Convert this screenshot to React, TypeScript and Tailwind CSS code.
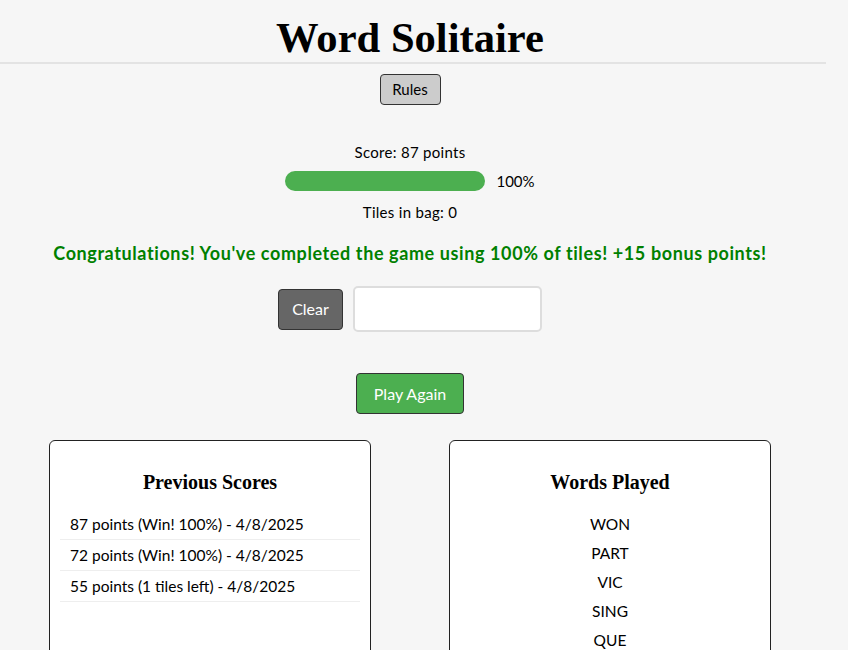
const body = { fontFamily: "Lato, 'Liberation Sans', sans-serif" };
const serif = { fontFamily: "'Liberation Serif', 'DejaVu Serif', serif" };

const scores = [
  "87 points (Win! 100%) - 4/8/2025",
  "72 points (Win! 100%) - 4/8/2025",
  "55 points (1 tiles left) - 4/8/2025",
];

const words = ["WON", "PART", "VIC", "SING", "QUE"];

export default function App() {
  return (
    <div className="min-h-[650px] w-[848px] bg-[#f6f6f6] text-black" style={body}>
      <header className="flex h-[64px] w-[826px] items-center justify-center border-b-2 border-[#e3e3e3] pt-[14px]">
        <h1 className="ml-[-6px] text-[42.6px] font-bold leading-[50px]" style={serif}>
          Word Solitaire
        </h1>
      </header>

      <div className="flex w-[820px] flex-col items-center">
        <button className="mt-[10px] h-[31px] w-[61px] rounded-[4px] border border-[#333] bg-[#cccccc] text-[15px]">
          Rules
        </button>

        <p className="mt-[37px] text-[15px] leading-[20px] tracking-[0.3px]">Score: 87 points</p>
        <div className="mt-[9px] flex items-center gap-[11px]">
          <div className="h-[20px] w-[200px] rounded-full bg-[#4caf50]" />
          <span className="text-[15px] leading-[20px]">100%</span>
        </div>
        <p className="mt-[11px] text-[15px] leading-[20px] tracking-[0.3px]">Tiles in bag: 0</p>

        <p className="mt-[19px] text-[18px] font-bold leading-[24px] tracking-[0.6px] text-[#008000]">
          Congratulations! You've completed the game using 100% of tiles! +15 bonus points!
        </p>

        <div className="mt-[21px] flex items-center gap-[10px]">
          <button className="h-[41px] w-[65px] rounded-[4px] border border-[#333] bg-[#666666] text-[16px] text-white">
            Clear
          </button>
          <input
            className="h-[46px] w-[189px] rounded-[5px] border-2 border-[#dddddd] bg-white px-2 outline-none"
            readOnly
          />
        </div>

        <button className="mt-[41px] h-[41px] w-[108px] rounded-[4px] border border-[#333] bg-[#4caf50] text-[16px] text-white">
          Play Again
        </button>
      </div>

      <div className="mt-[26px] flex w-[820px] gap-[78px] pl-[49px]">
        <section className="h-[240px] w-[322px] rounded-[6px] border border-[#222] bg-white px-[10px] pt-[29px]">
          <h2 className="text-center text-[20px] font-bold leading-[24px]" style={serif}>
            Previous Scores
          </h2>
          <ul className="mt-[15px]">
            {scores.map((s) => (
              <li key={s} className="h-[31px] border-b border-[#eeeeee] px-[10px] text-[15.5px] leading-[30px]">
                {s}
              </li>
            ))}
          </ul>
        </section>

        <section className="h-[240px] w-[322px] rounded-[6px] border border-[#222] bg-white px-[10px] pt-[29px]">
          <h2 className="text-center text-[20px] font-bold leading-[24px]" style={serif}>
            Words Played
          </h2>
          <ul className="mt-[16px]">
            {words.map((w) => (
              <li key={w} className="text-center text-[15.5px] leading-[29px]">
                {w}
              </li>
            ))}
          </ul>
        </section>
      </div>
    </div>
  );
}
